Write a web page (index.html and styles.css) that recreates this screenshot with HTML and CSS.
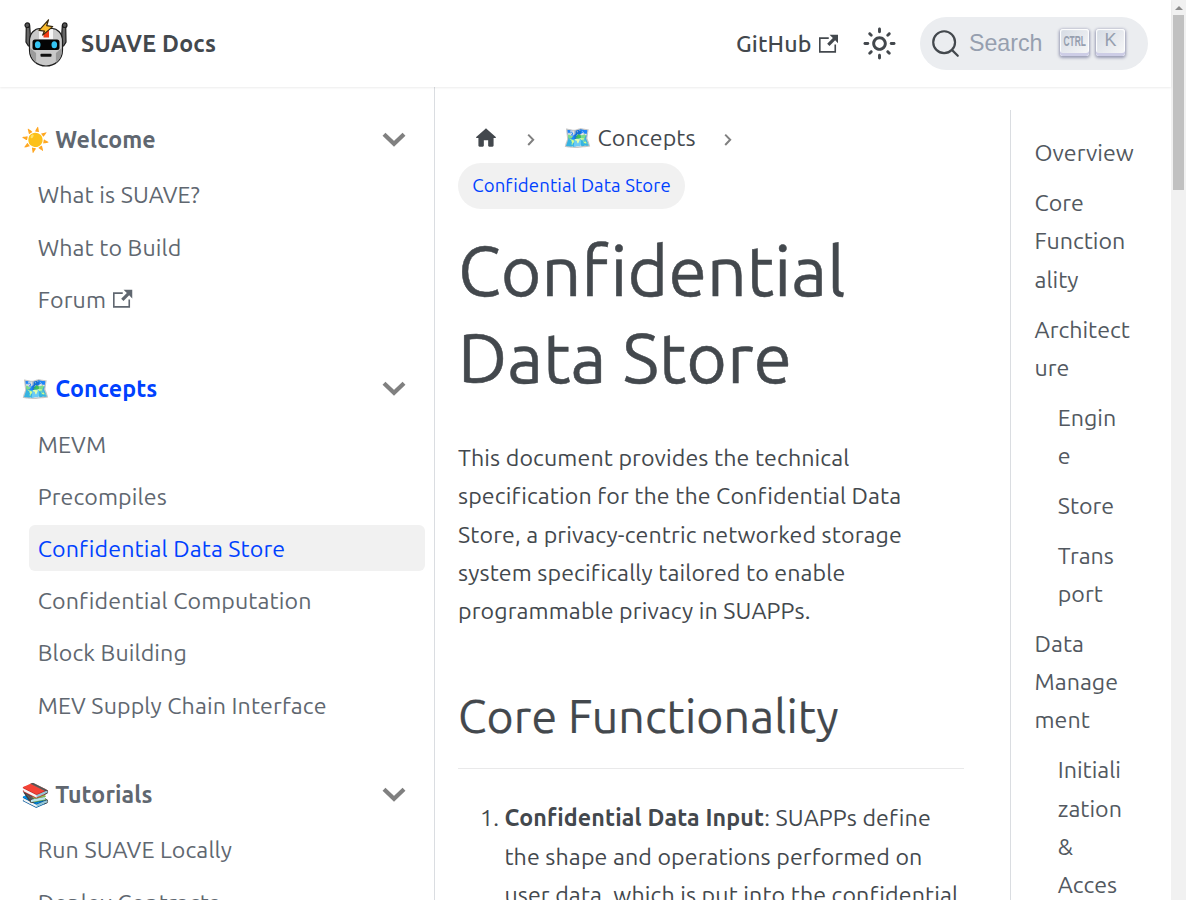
FILE: index.html
```html
<!DOCTYPE html>
<html lang="en">
<head>
<meta charset="utf-8">
<title>Confidential Data Store | SUAVE Docs</title>
<link rel="stylesheet" href="styles.css">
</head>
<body>
<svg class="defs" aria-hidden="true">
  <symbol id="ext" viewBox="0 0 24 24"><path fill="currentColor" d="M21 13v10h-21v-19h12v2h-10v15h17v-8h2zm3-12h-10.988l4.035 4-6.977 7.07 2.828 2.828 6.977-7.07 4.125 4.172v-11z"/></symbol>
  <symbol id="chev" viewBox="0 0 24 16"><path d="M2 2.2l10 9.6 10-9.6" fill="none" stroke="#808080" stroke-width="4.2"/></symbol>
  <symbol id="sep" viewBox="0 0 8 14"><path d="M1.2 1.6l5 5.2-5 5.2" fill="none" stroke="#808080" stroke-width="2"/></symbol>
</svg>
<div class="page">
  <header class="navbar">
    <svg class="logo" viewBox="0 0 46 50">
      <g stroke="#1c1c1c" stroke-width="1.2">
        <path d="M3.3 7h3.400l.8 12 2 4v4H5.400L3 23z" fill="#666"/>
        <path d="M42.700 7h-3.400l-.8 12-2 4v4h4.100l2.400-4z" fill="#666"/>
        <circle cx="4.300" cy="6.200" r="2.300" fill="#555"/>
        <circle cx="41.700" cy="6.200" r="2.300" fill="#555"/>
        <path d="M6.500 22C6.500 14 12 9.500 17 9.500h12c5 0 10.500 4.500 10.500 12.500v9c0 10-8 16-16.500 16S6.500 41 6.500 31z" fill="#c9c9c9"/>
      </g>
      <path d="M7.100 29l6 5v10C9.400 40 7.100 36 7.100 31zM38.900 29l-6 5v10c3.700-3 6-7 6-12z" fill="#9b9b9b"/>
      <path d="M16 10.100h14v10H16z" fill="#f5f5f5"/>
      <path d="M20.500 10.500h5.500v8h-5.500z" fill="#f13c14"/>
      <rect x="9.500" y="20.500" width="27" height="10.500" rx="2.500" fill="#050505"/>
      <ellipse cx="14.700" cy="25.800" rx="2.800" ry="3.500" fill="#35c5f4"/>
      <ellipse cx="31.300" cy="25.800" rx="2.800" ry="3.500" fill="#35c5f4"/>
      <rect x="17.500" y="34.800" width="11" height="3" rx=".8" fill="#111"/>
      <path d="M25.500 .8L16 11.300l5.500.8-1.800 4 10-8.500-6-.9z" fill="#fbbc2c" stroke="#3a2a10" stroke-width="1.200" stroke-linejoin="round"/>
    </svg>
    <b class="brand">SUAVE Docs</b>
    <a class="github">GitHub <svg class="ext"><use href="#ext"/></svg></a>
    <svg class="sun" viewBox="0 0 24 24"><path fill="currentColor" d="M12,9c1.65,0,3,1.35,3,3s-1.35,3-3,3s-3-1.35-3-3S10.350,9,12,9 M12,7c-2.760,0-5,2.240-5,5s2.240,5,5,5s5-2.240,5-5 S14.760,7,12,7L12,7z M2,13l2,0c0.550,0,1-0.450,1-1s-0.450-1-1-1l-2,0c-0.550,0-1,0.450-1,1S1.450,13,2,13z M20,13l2,0c0.550,0,1-0.450,1-1 s-0.450-1-1-1l-2,0c-0.550,0-1,0.450-1,1S19.450,13,20,13z M11,2v2c0,0.550,0.450,1,1,1s1-0.450,1-1V2c0-0.550-0.450-1-1-1S11,1.450,11,2z M11,20v2c0,0.550,0.450,1,1,1s1-0.450,1-1v-2c0-0.550-0.450-1-1-1C11.450,19,11,19.450,11,20z M5.990,4.580c-0.390-0.390-1.030-0.390-1.410,0 c-0.390,0.390-0.390,1.030,0,1.410l1.060,1.060c0.390,0.390,1.030,0.390,1.410,0s0.390-1.030,0-1.410L5.990,4.580z M18.360,16.950 c-0.390-0.390-1.030-0.390-1.410,0c-0.390,0.390-0.390,1.030,0,1.410l1.060,1.060c0.390,0.390,1.030,0.390,1.410,0c0.390-0.390,0.390-1.030,0-1.410 L18.360,16.950z M19.420,5.990c0.390-0.390,0.390-1.030,0-1.410c-0.390-0.390-1.030-0.390-1.410,0l-1.060,1.060c-0.390,0.390-0.390,1.030,0,1.410 s1.030,0.390,1.410,0L19.420,5.990z M7.050,18.360c0.390-0.390,0.390-1.030,0-1.410c-0.390-0.390-1.030-0.390-1.410,0l-1.060,1.060 c-0.390,0.390-0.390,1.030,0,1.410s1.030,0.390,1.410,0L7.050,18.360z"/></svg>
    <div class="search">
      <svg class="lens" viewBox="0 0 20 20"><path d="M14.386 14.386l4.088 4.088-4.088-4.088c-2.942 2.942-7.711 2.942-10.653 0s-2.942-7.711 0-10.653 7.711-2.942 10.653 0 2.942 7.711 0 10.653z" stroke="currentColor" fill="none" stroke-width="1.500" stroke-linecap="round" stroke-linejoin="round"/></svg>
      <span class="placeholder">Search</span>
      <kbd class="key"><span class="ctrl">CTRL</span></kbd>
      <kbd class="key">K</kbd>
    </div>
  </header>
  <div class="body">
    <nav class="sidebar">
      <section>
        <h4>☀️ Welcome<svg class="chev"><use href="#chev"/></svg></h4>
        <a>What is SUAVE?</a>
        <a>What to Build</a>
        <a>Forum <svg class="ext"><use href="#ext"/></svg></a>
      </section>
      <section>
        <h4 class="current">🗺️ Concepts<svg class="chev"><use href="#chev"/></svg></h4>
        <a>MEVM</a>
        <a>Precompiles</a>
        <a class="active">Confidential Data Store</a>
        <a>Confidential Computation</a>
        <a>Block Building</a>
        <a>MEV Supply Chain Interface</a>
      </section>
      <section>
        <h4>📚 Tutorials<svg class="chev"><use href="#chev"/></svg></h4>
        <a>Run SUAVE Locally</a>
        <a>Deploy Contracts</a>
      </section>
    </nav>
    <main class="content">
      <div class="crumbs">
        <svg class="home" viewBox="0 0 24 24"><path d="M10 19v-5h4v5c0 .55.45 1 1 1h3c.55 0 1-.45 1-1v-7h1.700c.46 0 .68-.57.33-.87L12.670 3.600c-.38-.34-.96-.34-1.340 0l-8.360 7.530c-.34.3-.13.87.33.87H5v7c0 .55.45 1 1 1h3c.55 0 1-.45 1-1z" fill="currentColor"/></svg>
        <svg class="sep"><use href="#sep"/></svg>
        <span>🗺️ Concepts</span>
        <svg class="sep last"><use href="#sep"/></svg>
      </div>
      <span class="pill">Confidential Data Store</span>
      <h1>Confidential<br>Data Store</h1>
      <p>This document provides the technical<br>specification for the the Confidential Data<br>Store, a privacy-centric networked storage<br>system specifically tailored to enable<br>programmable privacy in SUAPPs.</p>
      <h2>Core Functionality</h2>
      <hr>
      <ol>
        <li><strong>Confidential Data Input</strong>: SUAPPs define<br>the shape and operations performed on<br>user data, which is put into the confidential</li>
      </ol>
    </main>
    <aside class="toc">
      <a>Overview</a>
      <a>Core<br>Function<br>ality</a>
      <a>Architect<br>ure</a>
      <a class="sub">Engin<br>e</a>
      <a class="sub">Store</a>
      <a class="sub">Trans<br>port</a>
      <a>Data<br>Manage<br>ment</a>
      <a class="sub">Initiali<br>zation<br>&amp;<br>Acces</a>
    </aside>
  </div>
</div>
<div class="scrollbar"><i class="arrow"></i><i class="thumb"></i></div>
</body>
</html>
```
FILE: styles.css
```css
* { box-sizing: border-box; }
html { font-size: 23.2px; }
body {
  margin: 0;
  height: 900px;
  overflow: hidden;
  display: flex;
  background: #fff;
  color: #43484d;
  font: 1rem/1.65 Ubuntu, "Noto Sans", sans-serif;
  letter-spacing: .005em;
}
a, span { white-space: nowrap; }
svg { flex: none; }
.defs { display: none; }
.page { width: 1171px; height: 900px; display: flex; flex-direction: column; }

.navbar {
  height: 87px;
  flex: none;
  display: flex;
  align-items: center;
  padding: 0 23px;
  box-shadow: 0 1px 2px rgba(0, 0, 0, .08);
  z-index: 1;
}
.logo { width: 46px; height: 50px; margin-right: 12px; }
.brand { margin-right: auto; letter-spacing: .011em; }
.github { display: flex; align-items: center; gap: 7px; font-weight: 500; letter-spacing: .006em; }
.ext { width: 19.500px; height: 19.500px; }
.sun { width: 35px; height: 35px; margin: 0 23px 0 24px; }
.search {
  width: 228px;
  height: 53px;
  border-radius: 27px;
  background: #ebedf0;
  display: flex;
  align-items: center;
  padding-left: 11px;
}
.lens { width: 29px; height: 29px; }
.placeholder { width: 82px; margin-left: 9px; margin-right: 9px; color: #969faf; font-family: "Liberation Sans", Arial, sans-serif; letter-spacing: 0; }
.key {
  width: 29px;
  height: 27px;
  margin: 0 7px 3px 0;
  padding-bottom: 3px;
  border-radius: 3px;
  display: flex;
  align-items: center;
  justify-content: center;
  background: linear-gradient(-225deg, #d5dbe4, #f8f8f8);
  box-shadow: inset 0 -3px 0 0 #cdcde6, inset 0 0 1px 1px #fff, 0 1px 3px 1px rgba(30, 35, 90, .4);
  color: #969faf;
  font: 18px "Liberation Sans", Arial, sans-serif;
  letter-spacing: 0;
}
.ctrl { font-size: 14px; font-weight: 700; transform: scaleX(.6); }

.body { flex: 1; min-height: 0; display: flex; }
.sidebar {
  width: 435px;
  border-right: 1px solid #dadde1;
  padding: 29px 9px 0 20.500px;
  overflow: hidden;
  color: #606770;
}
.sidebar section { margin-bottom: 43px; }
.sidebar h4 {
  display: flex;
  justify-content: space-between;
  align-items: center;
  height: 46.4px;
  margin: 0 19.500px 9px 0;
  font-size: 1rem;
}
.sidebar h4.current { color: #0041ff; }
.chev { width: 24px; height: 16px; margin-top: 2px; }
.sidebar a {
  display: flex;
  align-items: center;
  gap: 7px;
  height: 46.4px;
  margin: 0 0 5.8px 8.500px;
  padding-left: 8.700px;
  border-radius: 6px;
}
.sidebar a.active { background: #f1f1f1; color: #0041ff; }

.content { width: 575px; padding: 32px 46px 0 23px; overflow: hidden; }
.crumbs { display: flex; align-items: center; height: 38px; }
.crumbs span { margin-top: -2px; }
.home { width: 26px; height: 26px; margin: 0 28px 0 15px; }
.sep { width: 8px; height: 14px; margin: 3px 28px 0 0; }
.sep.last { margin-left: 28px; }
.pill {
  display: block;
  width: 227px;
  height: 46px;
  margin-top: 6px;
  border-radius: 23px;
  background: #f1f1f1;
  color: #0041ff;
  font-size: .8rem;
  line-height: 45px;
  text-align: center;
}
h1 { margin: 18px 0 37px; font-size: 3rem; font-weight: 400; line-height: 87px; -webkit-text-stroke: .5px; }
p { margin: 0; white-space: nowrap; }
h2 { margin: 58px 0 0; font-size: 2rem; font-weight: 400; line-height: 58px; -webkit-text-stroke: .2px; }
hr { margin: 23px 0 29px; border: 0; height: 1px; background: #e9e9ea; }
ol { margin: 0; padding-left: 46.4px; white-space: nowrap; }
strong { letter-spacing: .007em; }

.toc {
  width: 161px;
  margin-top: 23px;
  padding: 23.200px 0 0 23.600px;
  border-left: 1px solid #dadde1;
  overflow: hidden;
  color: #525860;
  letter-spacing: 0;
}
.toc a { display: block; margin-bottom: 11.6px; }
.toc .sub { padding-left: 23.2px; }

.scrollbar { width: 15px; height: 900px; background: #f1f1f1; display: flex; flex-direction: column; align-items: center; }
.arrow { margin: 6px 0 5px; border: 4px solid transparent; border-top: 0; border-bottom-color: #8b8b8b; }
.thumb { width: 11px; height: 175px; background: #c1c1c1; }
```
